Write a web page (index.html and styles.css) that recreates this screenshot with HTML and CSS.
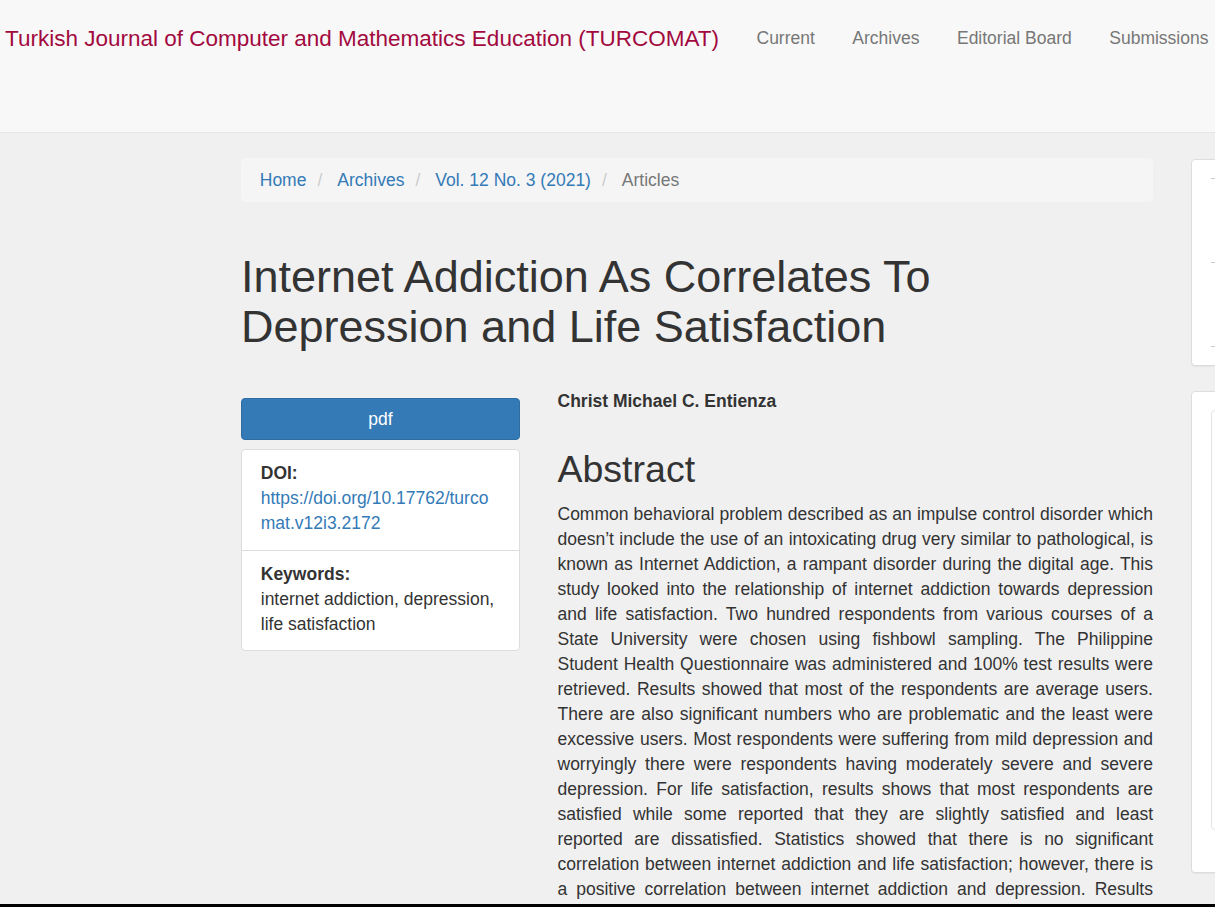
FILE: index.html
```html
<!DOCTYPE html>
<html lang="en">
<head>
<meta charset="utf-8">
<title>Internet Addiction As Correlates To Depression and Life Satisfaction</title>
<link rel="stylesheet" href="styles.css">
</head>
<body>
<header class="site-header">
  <a class="brand" href="#">Turkish Journal of Computer and Mathematics Education (TURCOMAT)</a>
  <nav class="primary-nav">
    <a href="#">Current</a>
    <a href="#">Archives</a>
    <a href="#">Editorial Board</a>
    <a href="#">Submissions</a>
  </nav>
</header>

<div class="page">
  <main class="main">
    <ol class="breadcrumb">
      <li><a href="#">Home</a></li>
      <li class="sep">/</li>
      <li><a href="#">Archives</a></li>
      <li class="sep">/</li>
      <li><a href="#">Vol. 12 No. 3 (2021)</a></li>
      <li class="sep">/</li>
      <li class="active">Articles</li>
    </ol>

    <h1 class="article-title">Internet Addiction As Correlates To Depression and Life Satisfaction</h1>

    <div class="article-row">
      <div class="article-side">
        <a class="btn-pdf" href="#">pdf</a>
        <div class="meta-panel">
          <div class="meta-item">
            <strong class="meta-label">DOI:</strong>
            <a class="doi-link" href="#">https://doi.org/10.17762/turcomat.v12i3.2172</a>
          </div>
          <div class="meta-item">
            <strong class="meta-label">Keywords:</strong>
            <span>internet addiction, depression, life satisfaction</span>
          </div>
        </div>
      </div>
      <div class="article-body">
        <div class="author">Christ Michael C. Entienza</div>
        <h2 class="abstract-title">Abstract</h2>
        <p class="abstract">Common behavioral problem described as an impulse control disorder which doesn’t include the use of an intoxicating drug very similar to pathological, is known as Internet Addiction, a rampant disorder during the digital age. This study looked into the relationship of internet addiction towards depression and life satisfaction. Two hundred respondents from various courses of a State University were chosen using fishbowl sampling. The Philippine Student Health Questionnaire was administered and 100% test results were retrieved. Results showed that most of the respondents are average users. There are also significant numbers who are problematic and the least were excessive users. Most respondents were suffering from mild depression and worryingly there were respondents having moderately severe and severe depression. For life satisfaction, results shows that most respondents are satisfied while some reported that they are slightly satisfied and least reported are dissatisfied. Statistics showed that there is no significant correlation between internet addiction and life satisfaction; however, there is a positive correlation between internet addiction and depression. Results imply that the higher the level of internet addiction, the more depressed the respondents become.</p>
      </div>
    </div>
  </main>

  <aside class="sidebar">
    <div class="block block-first">
      <div class="rule rule-1"></div>
      <div class="rule rule-2"></div>
      <div class="rule rule-3"></div>
    </div>
    <div class="block block-second">
      <div class="inner-box"></div>
    </div>
  </aside>
</div>

<div class="bottom-edge"></div>
</body>
</html>
```

FILE: styles.css
```css
html, body {
  margin: 0;
  padding: 0;
}

body {
  background: #f0f0f0;
  color: #333;
  font-family: "Liberation Sans", Arial, Helvetica, sans-serif;
  font-size: 17.5px;
  line-height: 25px;
  overflow-x: hidden;
}

a {
  text-decoration: none;
}

.site-header {
  height: 132px;
  box-sizing: content-box;
  background: #f8f8f8;
  border-bottom: 1px solid #e7e7e7;
  display: flex;
  align-items: flex-start;
  white-space: nowrap;
}

.brand {
  margin-top: 26px;
  padding: 0 18.75px 0 5px;
  font-size: 22.5px;
  line-height: 25px;
  color: #a20a3f;
}

.primary-nav {
  display: flex;
  margin-top: 26px;
}

.primary-nav a {
  padding: 0 18.75px;
  color: #777;
  font-size: 17.5px;
  line-height: 25px;
}

.page {
  display: flex;
  align-items: flex-start;
  padding-left: 241px;
  gap: 37.5px;
}

.main {
  flex: 0 0 912px;
  width: 912px;
  margin-top: 25px;
  display: flex;
  flex-direction: column;
}

.breadcrumb {
  list-style: none;
  margin: 0 0 25px;
  padding: 9.5px 18.75px;
  background: #f5f5f5;
  border-radius: 4px;
  display: flex;
}

.breadcrumb li {
  display: block;
}

.breadcrumb a {
  color: #337ab7;
}

.breadcrumb .sep {
  color: #ccc;
  margin: 0 15px 0 11px;
}

.breadcrumb .active {
  color: #777;
}

.article-title {
  margin: 25px 0 12.5px;
  font-size: 45px;
  line-height: 49.5px;
  font-weight: 500;
  color: #333;
}

.article-row {
  display: flex;
  gap: 37.5px;
  margin-top: 25px;
}

.article-side {
  flex: 0 0 279px;
  width: 279px;
  padding-top: 9.5px;
}

.btn-pdf {
  display: block;
  box-sizing: border-box;
  height: 42px;
  padding: 7.5px 15px;
  background: #337ab7;
  border: 1px solid #2e6da4;
  border-radius: 4px;
  color: #fff;
  text-align: center;
  font-size: 17.5px;
  line-height: 25px;
}

.meta-panel {
  margin-top: 9px;
  background: #fff;
  border: 1px solid #ddd;
  border-radius: 4px;
}

.meta-item {
  padding: 11px 18.75px 13.5px;
  display: flex;
  flex-direction: column;
}

.meta-item + .meta-item {
  border-top: 1px solid #ddd;
}

.meta-label {
  font-weight: 700;
  color: #333;
}

.doi-link {
  color: #337ab7;
  word-break: break-all;
}

.article-body {
  flex: 0 0 595.5px;
  width: 595.5px;
  display: flex;
  flex-direction: column;
}

.author {
  font-weight: 700;
  margin-bottom: 10px;
}

.abstract-title {
  margin: 25px 0 12.5px;
  font-size: 37.5px;
  line-height: 41.25px;
  font-weight: 500;
  color: #333;
}

.abstract {
  margin: 0 0 12.5px;
  text-align: justify;
}

.sidebar {
  flex: 0 0 300px;
  width: 300px;
  margin-top: 26px;
}

.block {
  background: #fff;
  border: 1px solid #ddd;
  border-radius: 4px;
  box-shadow: 0 1px 1px rgba(0, 0, 0, 0.05);
  box-sizing: border-box;
  margin-bottom: 25px;
  padding: 0 19px;
}

.block-first {
  height: 207px;
  padding-top: 18px;
}

.rule {
  height: 1px;
  width: 60px;
  background: #ccc;
}

.rule-2 {
  margin-top: 83px;
}

.rule-3 {
  margin-top: 83px;
}

.block-second {
  height: 482px;
  padding-top: 18px;
}

.inner-box {
  height: 420px;
  border: 1px solid #e3e3e3;
  border-radius: 4px;
  box-sizing: border-box;
}

.bottom-edge {
  position: fixed;
  left: 0;
  right: 0;
  bottom: 0;
  height: 3px;
  background: #000;
}
```
